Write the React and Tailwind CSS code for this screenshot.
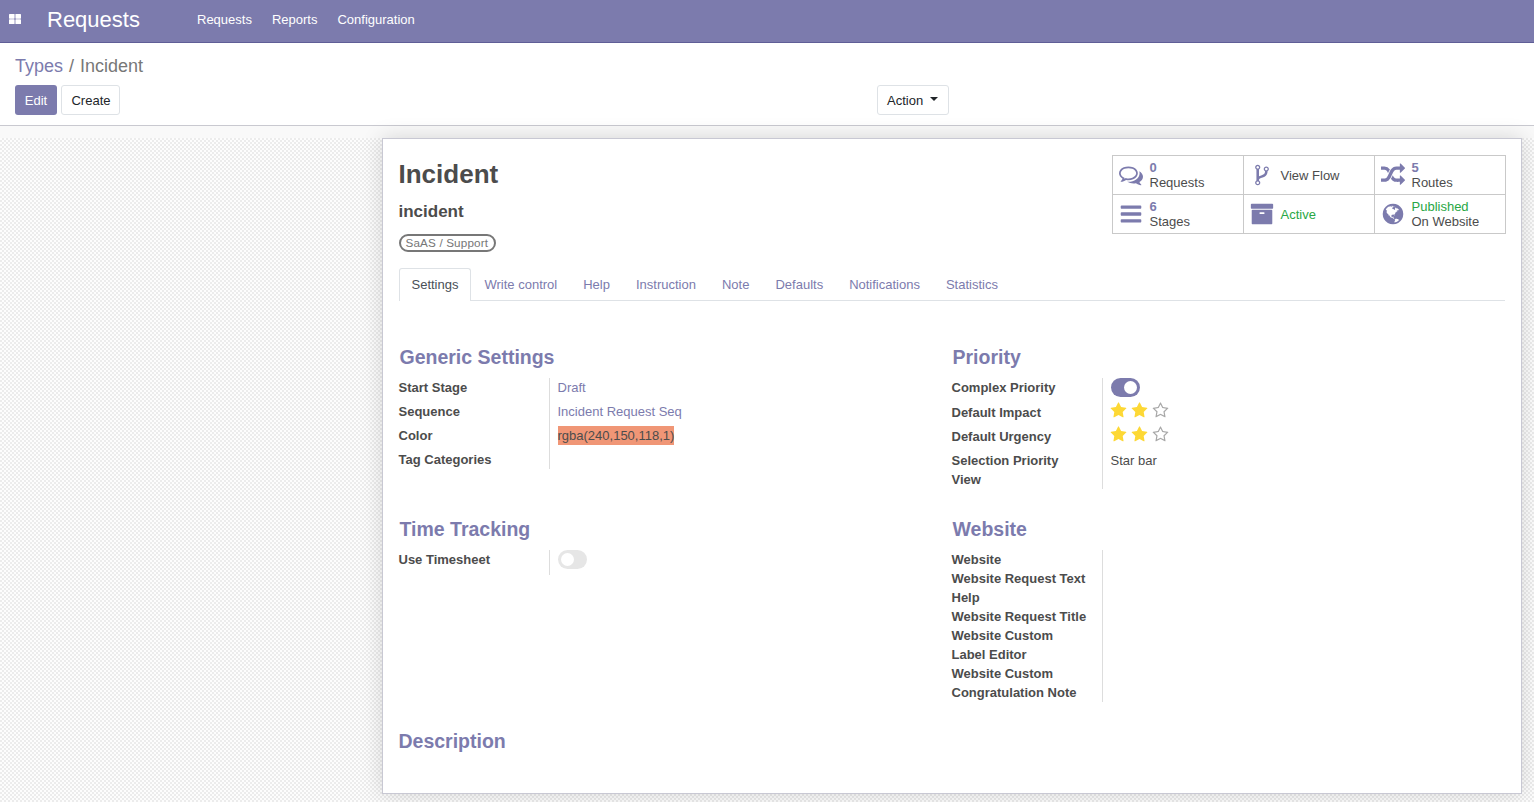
const PATHS = {
  commentsO: "M704 384q-153 0-286 52t-211.5 141-78.5 191q0 82 53 158t149 132l97 56-35 84q34-20 62-39l44-31 53 10q78 14 153 14 153 0 286-52t211.5-141 78.5-191-78.5-191-211.5-141-286-52zm0-128q191 0 353.5 68.5t256.5 186.5 94 257-94 257-256.5 186.5-353.5 68.5q-86 0-176-16-124 88-278 128-36 9-86 16h-3q-11 0-20.5-8t-11.5-21q-1-3-1-6.5t.5-6.5 2-6l2.5-5 3.5-5.5 4-5 4.5-5 4-4.5q5-6 23-25t26-29.5 22.5-29 25-38.5 20.5-44q-124-72-195-177t-71-224q0-139 94-257t256.5-186.5 353.5-68.5zm822 1169q10 24 20.5 44t25 38.5 22.5 29 26 29.5 23 25q1 1 4 4.5t4.5 5 4 5 3.5 5.5l2.5 5 2 6 .5 6.5-1 6.5q-3 14-13 22t-22 7q-50-7-86-16-154-40-278-128-90 16-176 16-271 0-472-132 58 4 88 4 161 0 309-45t264-129q125-92 192-212t67-254q0-77-23-152 129 71 204 178t75 230q0 120-71 224.5t-195 176.5z",
  fork: "M672 1472q0-40-28-68t-68-28-68 28-28 68 28 68 68 28 68-28 28-68zm0-1152q0-40-28-68t-68-28-68 28-28 68 28 68 68 28 68-28 28-68zm640 128q0-40-28-68t-68-28-68 28-28 68 28 68 68 28 68-28 28-68zm96 0q0 52-26 96.5t-70 69.5q-2 287-226 414-67 38-203 81-128 40-169.5 71t-41.5 100v26q44 25 70 69.5t26 96.5q0 80-56 136t-136 56-136-56-56-136q0-52 26-96.5t70-69.5v-820q-44-25-70-69.5t-26-96.5q0-80 56-136t136-56 136 56 56 136q0 52-26 96.5t-70 69.5v497q54-26 154-57 55-17 87.5-29.5t70.5-31 59-39.5 40.5-51 28-69.5 8.5-91.5q-44-25-70-69.5t-26-96.5q0-80 56-136t136-56 136 56 56 136z",
  random: "M666 481q-60 92-137 273-22-45-37-72.5t-40.5-63.5-51-56.5-63-35-81.5-14.5h-224q-14 0-23-9t-9-23v-192q0-14 9-23t23-9h224q250 0 410 225zm1126 799q0 14-9 23l-320 320q-9 9-23 9-13 0-22.5-9.5t-9.5-22.5v-192q-32 0-85 .5t-81 1-73-1-71-5-64-10.5-63-18.5-58-28.5-59-40-55-53.5-56-69.5q59-93 136-273 22 45 37 72.5t40.5 63.5 51 56.5 63 35 81.5 14.5h256v-192q0-14 9-23t23-9q12 0 24 10l319 319q9 9 9 23zm0-896q0 14-9 23l-320 320q-9 9-23 9-13 0-22.5-9.5t-9.5-22.5v-192h-256q-48 0-87 15t-69 45-51 61.5-45 77.5q-32 62-78 171-29 66-49.5 111t-54 105-64 100-74 83-90 68.5-106.5 42-128 16.5h-224q-14 0-23-9t-9-23v-192q0-14 9-23t23-9h224q48 0 87-15t69-45 51-61.5 45-77.5q32-62 78-171 29-66 49.5-111t54-105 64-100 74-83 90-68.5 106.5-42 128-16.5h256v-192q0-14 9-23t23-9q12 0 24 10l319 319q9 9 9 23z",
  bars: "M1664 1344v128q0 26-19 45t-45 19h-1408q-26 0-45-19t-19-45v-128q0-26 19-45t45-19h1408q26 0 45 19t19 45zm0-512v128q0 26-19 45t-45 19h-1408q-26 0-45-19t-19-45v-128q0-26 19-45t45-19h1408q26 0 45 19t19 45zm0-512v128q0 26-19 45t-45 19h-1408q-26 0-45-19t-19-45v-128q0-26 19-45t45-19h1408q26 0 45 19t19 45z",
  archive: "M1088 832q0-26-19-45t-45-19h-256q-26 0-45 19t-19 45 19 45 45 19h256q26 0 45-19t19-45zm576-192v960q0 26-19 45t-45 19h-1408q-26 0-45-19t-19-45v-960q0-26 19-45t45-19h1408q26 0 45 19t19 45zm64-448v256q0 26-19 45t-45 19h-1536q-26 0-45-19t-19-45v-256q0-26 19-45t45-19h1536q26 0 45 19t19 45z",
  globe: "M896 128q209 0 385.5 103t279.5 279.5 103 385.5-103 385.5-279.5 279.5-385.5 103-385.5-103-279.5-279.5-103-385.5 103-385.5 279.5-279.5 385.5-103zm274 521q-2 1-9.5 9.5t-13.5 9.5q2 0 4.5-5t5-11 3.5-7q6-7 22-15 14-6 52-12 34-8 51 11-2-2 9.5-13t14.5-12q3-2 15-4.5t15-7.5l2-22q-12 1-17.5-7t-6.5-21q0 2-6 8 0-7-4.5-8t-11.5 1-9 1q-10-3-15-7.5t-8-16.5-4-15q-2-5-9.5-11t-9.5-10q-1-2-2.5-5.5t-3-6.5-4-5.5-5.5-2.5-7 5-7.5 10-4.5 5q-3-2-6-1.5t-4.5 1-4.5 3-5 3.5q-3 2-8.5 3t-8.5 2q15-5-1-11-10-4-16-3 9-4 7.5-12t-8.5-14h5q-1-4-8.5-8.5t-17.5-8.5-13-6q-8-5-34-9.5t-33-.5q-5 6-4.5 10.5t4 14 3.5 12.5q1 6-5.5 13t-6.5 12q0 7 14 15.5t10 21.5q-3 8-16 16t-16 12q-5 8-1.5 18.5t10.5 16.5q2 2 1.5 4t-3.5 4.5-5.5 4-6.5 3.5l-3 2q-11 5-20.5-6t-13.5-26q-7-25-16-30-23-8-29 1-5-13-41-26-25-9-58-4 6-1 0-15-7-15-19-12 3-6 4-17.5t1-13.5q3-13 12-23 1-1 7-8.5t9.5-13.5.5-6q35 4 50-11 5-5 11.5-17t10.5-17q9-6 14-5.5t14.5 5.5 14.5 5q14 1 15.5-11t-7.5-20q12 1 3-17-4-7-8-9-12-4-27 5-8 4 2 8-1-1-9.5 10.5t-16.5 17.5-16-5q-1-1-5.5-13.5t-9.5-13.5q-8 0-16 15 3-8-11-15t-24-8q19-12-8-27-7-4-20.5-5t-19.5 4q-5 7-5.5 11.5t5 8 10.5 5.5 11.5 4 8.5 3q14 10 8 14-2 1-8.5 3.5t-11.5 4.5-6 4q-3 4 0 14t-2 14q-5-5-9-17.5t-7-16.5q7 9-25 6l-10-1q-4 0-16 2t-20.5 1-13.5-8q-4-8 0-20 1-4 4-2-4-3-11-9.5t-10-8.5q-46 15-94 41 6 1 12-1 5-2 13-6.5t10-5.5q34-14 42-7l5-5q14 16 20 25-7-4-30-1-20 6-22 12 7 12 5 18-4-3-11.5-10t-14.5-11-15-5q-16 0-22 1-146 80-235 222 7 7 12 8 4 1 5 9t2.5 11 11.5-3q9 8 3 19 1-1 44 27 19 17 21 21 3 11-10 18-1-2-9-9t-9-4q-3 5 .5 18.5t10.5 12.5q-7 0-9.5 16t-2.5 35.5-1 23.5l2 1q-3 12 5.5 34.5t21.5 19.5q-13 3 20 43 6 8 8 9 3 2 12 7.5t15 10 10 10.5q4 5 10 22.5t14 23.5q-2 6 9.5 20t10.5 23q-1 0-2.5 1t-2.5 1q3 7 15.5 14t15.5 13q1 3 2 10t3 11 8 2q2-20-24-62-15-25-17-29-3-5-5.5-15.5t-4.5-14.5q2 0 6 1.5t8.5 3.5 7.5 4 2 3q-3 7 2 17.5t12 18.5 17 19 12 13q6 6 14 19.5t0 13.5q9 0 20 10.5t17 19.5q5 8 8 26t5 24q2 7 8.5 13.5t12.5 9.5l16 8 13 7q5 2 18.5 10.5t21.5 11.5q10 4 16 4t14.5-2.5 13.5-3.5q15-2 29 15t21 21q36 19 55 11-2 1 .5 7.5t8 15.5 9 14.5 5.5 8.5q5 6 18 15t18 15q6-4 7-9-3 8 7 20t18 10q14-3 14-32-31 15-49-18 0-1-2.5-5.5t-4-8.5-2.5-8.5 0-7.5 5-3q9 0 10-3.5t-2-12.5-4-13q-1-8-11-20t-12-15q-5 9-16 8t-16-9q0 1-1.5 5.5t-1.5 6.5q-13 0-15-1 1-3 2.5-17.5t3.5-22.5q1-4 5.5-12t7.5-14.5 4-12.5-4.5-9.5-17.5-2.5q-19 1-26 20-1 3-3 10.5t-5 11.5-9 7q-7 3-24 2t-24-5q-13-8-22.5-29t-9.5-37q0-10 2.5-26.5t3-25-5.5-24.5q3-2 9-9.5t10-10.5q2-1 4.5-1.5t4.5 0 4-1.5 3-6q-1-1-4-3-3-3-4-3 7 3 28.5-1.5t27.5 1.5q15 11 22-2 0-1-2.5-9.5t-.5-13.5q5 27 29 9 3 3 15.5 5t17.5 5q3 2 7 5.5t5.5 4.5 5-.5 8.5-6.5q10 14 12 24 11 40 19 44 7 3 11 2t4.5-9.5 0-14-1.5-12.5l-1-8v-18l-1-8q-15-3-18.5-12t1.5-18.5 15-18.5q1-1 8-3.5t15.5-6.5 12.5-8q21-19 15-35 7 0 11-9-1 0-5-3t-7.5-5-4.5-2q9-5 2-16 5-3 7.5-11t7.5-10q9 12 21 2 7-8 1-16 5-7 20.5-10.5t18.5-9.5q7 2 8-2t1-12 3-12q4-5 15-9t13-5l17-11q3-4 0-4 18 2 31-11 10-11-6-20 3-6-3-9.5t-15-5.5q3-1 11.5-.5t10.5-1.5q15-10-7-16-17-5-43 12zm-163 877q206-36 351-189-3-3-12.5-4.5t-12.5-3.5q-18-7-24-8 1-7-2.5-13t-8-9-12.5-8-11-7q-2-2-7-6t-7-5.5-7.5-4.5-8.5-2-10 1l-3 1q-3 1-5.5 2.5t-5.5 3-4 3 0 2.5q-21-17-36-22-5-1-11-5.5t-10.5-7-10-1.5-11.5 7q-5 5-6 15t-2 13q-7-5 0-17.5t2-18.5q-3-6-10.5-4.5t-12 4.5-11.5 8.5-9 6.5-8.5 5.5-8.5 7.5q-3 4-6 12t-5 11q-2-4-11.5-6.5t-9.5-5.5q2 10 4 35t5 38q7 31-12 48-27 25-29 40-4 22 12 26 0 7-8 20.5t-7 21.5q0 6 2 16z",
  star: "M1728 647q0 22-26 48l-363 354 86 500q1 7 1 20 0 21-10.5 35.5t-30.5 14.5q-19 0-40-12l-449-236-449 236q-22 12-40 12-21 0-31.5-14.5t-10.5-35.5q0-6 2-20l86-500-364-354q-25-27-25-48 0-37 56-46l502-73 225-455q19-41 49-41t49 41l225 455 502 73q56 9 56 46z",
  starO: "M1201 1004l306-297-422-62-189-382-189 382-422 62 306 297-73 421 378-199 377 199zm527-357q0 22-26 48l-363 354 86 500q1 7 1 20 0 50-41 50-19 0-40-12l-449-236-449 236q-22 12-40 12-21 0-31.5-14.5t-10.5-35.5q0-6 2-20l86-500-364-354q-25-27-25-48 0-37 56-46l502-73 225-455q19-41 49-41t49 41l225 455 502 73q56 9 56 46z",
};

function Icon({ name, className }) {
  return (
    <svg viewBox="0 0 1792 1792" fill="currentColor" className={className}>
      <path d={PATHS[name]} />
    </svg>
  );
}

function Stat({ icon, top, topClass, label }) {
  return (
    <div className="flex h-[39px] items-center border-r border-b border-[#c9c9c9] pl-[6px]">
      <Icon name={icon} className="size-6 shrink-0 text-[#7c7bad]" />
      <div className="ml-[6.5px] flex flex-col leading-[15px]">
        {top && <span className={topClass}>{top}</span>}
        {label && <span>{label}</span>}
      </div>
    </div>
  );
}

function Group({ title, labels, children }) {
  return (
    <section>
      <h2 className="h-[41px] pl-px text-[19.5px] leading-[41px] font-bold text-[#7c7bad]">{title}</h2>
      <div className="flex">
        <div className="flex w-[151px] flex-col border-r border-[#ddd] font-bold leading-[19px]">{labels}</div>
        <div className="flex flex-col items-start pl-2 leading-[19px]">{children}</div>
      </div>
    </section>
  );
}

function Toggle({ on }) {
  return (
    <div className={on ? "flex h-[19px] w-[29px] items-center justify-end rounded-full bg-[#7c7bad] px-[3px]" : "flex h-[19px] w-[29px] items-center rounded-full bg-[#e6e6e6] px-[3px]"}>
      <div className="size-[13px] rounded-full bg-white" />
    </div>
  );
}

function Stars() {
  return (
    <div className="-ml-px flex h-6 gap-[4px]">
      <Icon name="star" className="size-[17px] text-[#fdd835]" />
      <Icon name="star" className="size-[17px] text-[#fdd835]" />
      <Icon name="starO" className="size-[17px] text-[#a8a8a8]" />
    </div>
  );
}

const TABS = ["Write control", "Help", "Instruction", "Note", "Defaults", "Notifications", "Statistics"];

export default function App() {
  return (
    <div className="flex h-[802px] w-[1534px] flex-col overflow-hidden bg-white font-['Liberation_Sans',Arial,sans-serif] text-[13px] text-[#4c4c4c]">
      <header className="flex h-[43px] shrink-0 border-b border-[#5f5e97] bg-[#7c7bad] text-white">
        <svg viewBox="0 0 12 10" className="mt-[14px] ml-[9px] h-[10px] w-3" fill="currentColor">
          <rect x="0" y="0" width="5.6" height="4.7" rx="0.6" />
          <rect x="6.4" y="0" width="5.6" height="4.7" rx="0.6" />
          <rect x="0" y="5.3" width="5.6" height="4.7" rx="0.6" />
          <rect x="6.4" y="5.3" width="5.6" height="4.7" rx="0.6" />
        </svg>
        <div className="ml-[26px] w-[150px] text-[22px] leading-[39px]">Requests</div>
        <nav className="flex gap-5 leading-[39px]">
          <span>Requests</span>
          <span>Reports</span>
          <span>Configuration</span>
        </nav>
      </header>

      <div className="h-[83px] shrink-0 border-b border-[#c9c9d0] px-[15px]">
        <div className="h-[42px] text-[18px] leading-[47px] text-[#777]">
          <span className="text-[#7c7bad]">Types</span>
          <span className="px-[6px]">/</span>
          <span>Incident</span>
        </div>
        <div className="flex">
          <button className="h-[30px] w-[42px] rounded-[3px] bg-[#7c7bad] pt-px text-white">Edit</button>
          <button className="ml-1 h-[30px] w-[59px] rounded-[3px] border border-[#dee2e6] pt-px pl-px text-[#212529]">Create</button>
          <button className="ml-[757px] flex h-[30px] w-[72px] items-center rounded-[3px] border border-[#dee2e6] pt-px pl-[9px] text-[#212529]">
            Action
            <span className="mb-1 ml-[7px] border-x-4 border-t-4 border-x-transparent border-t-[#212529]" />
          </button>
        </div>
      </div>

      <main className="flex min-h-0 grow flex-col bg-[#f9f9f9]">
        <div className="h-3 shrink-0" />
        <div className="grow bg-[repeating-conic-gradient(#ececec_0_25%,#fdfdfd_0_50%)] bg-[length:4px_4px] pl-[382px]">
          <div className="h-[656px] w-[1140px] border border-[#c8c8d3] bg-white pr-[15px] pl-[15.5px] shadow-[0_0_20px_rgba(0,0,0,0.15)]">
            <div className="flex h-[129px] justify-between pt-4">
              <div>
                <h1 className="text-[26px] leading-[38px] font-bold">Incident</h1>
                <h3 className="mt-[9px] text-[17px] leading-[19px] font-bold">incident</h3>
                <div className="mt-[13px] h-[18px] w-[97px] rounded-full border-2 border-[#777] pl-[5px] text-[11.7px] leading-[14px] tracking-[0.15px] text-[#777]">SaAS / Support</div>
              </div>
              <div className="grid h-[79px] w-[394px] grid-cols-3 border-t border-l border-[#c9c9c9]">
                <Stat icon="commentsO" top="0" topClass="font-bold text-[#7c7bad]" label="Requests" />
                <Stat icon="fork" label="View Flow" />
                <Stat icon="random" top="5" topClass="font-bold text-[#7c7bad]" label="Routes" />
                <Stat icon="bars" top="6" topClass="font-bold text-[#7c7bad]" label="Stages" />
                <Stat icon="archive" top="Active" topClass="text-[#28a745]" />
                <Stat icon="globe" top="Published" topClass="text-[#28a745]" label="On Website" />
              </div>
            </div>

            <div className="flex h-[33px] w-[1106px] border-b border-[#dee2e6] leading-[33px] text-[#7c7bad]">
              <div className="mr-[14px] h-[33px] w-[72px] rounded-t-[3px] border border-b-0 border-[#dee2e6] bg-white pl-3 leading-8 text-[#495057]">Settings</div>
              <div className="flex gap-[26px]">
                {TABS.map((t) => <span key={t}>{t}</span>)}
              </div>
            </div>

            <div className="grid grid-cols-[553px_553px] pt-[36px]">
              <Group title="Generic Settings" labels={<><span className="h-6">Start Stage</span><span className="h-6">Sequence</span><span className="h-6">Color</span><span>Tag Categories</span></>}>
                <span className="h-6 text-[#7c7bad]">Draft</span>
                <span className="h-6 text-[#7c7bad]">Incident Request Seq</span>
                <span className="bg-[#f09676]">rgba(240,150,118,1)</span>
              </Group>
              <Group title="Priority" labels={<><span className="h-[25px]">Complex Priority</span><span className="h-6">Default Impact</span><span className="h-6">Default Urgency</span><span>Selection Priority<br />View</span></>}>
                <div className="h-6"><Toggle on /></div>
                <Stars />
                <Stars />
                <span className="pt-px">Star bar</span>
              </Group>
            </div>
            <div className="grid grid-cols-[553px_553px] pt-5">
              <Group title="Time Tracking" labels={<span className="h-[25px]">Use Timesheet</span>}>
                <Toggle />
              </Group>
              <Group title="Website" labels={<><span>Website</span><span>Website Request Text<br />Help</span><span>Website Request Title</span><span>Website Custom<br />Label Editor</span><span>Website Custom<br />Congratulation Note</span></>} />
            </div>
            <h2 className="pt-[19px] text-[19.5px] leading-[41px] font-bold text-[#7c7bad]">Description</h2>
          </div>
        </div>
      </main>
    </div>
  );
}
